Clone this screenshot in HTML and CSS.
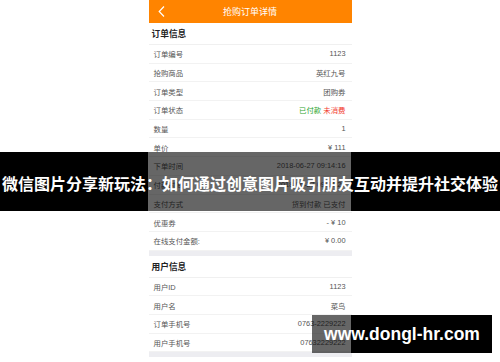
FILE: index.html
```html
<!DOCTYPE html>
<html lang="zh-CN">
<head>
    <meta charset="UTF-8">
    <meta name="viewport" content="width=device-width, initial-scale=1.0">
    <title>抢购订单详情</title>
    <link rel="stylesheet" href="styles.css">
</head>
<body>

<div class="phone">
    <div class="top-bar">
        <span class="back">
            <svg width="7" height="11" viewBox="0 0 7 11"><path d="M6 0.5 L1.2 5.5 L6 10.5" fill="none" stroke="#fff" stroke-width="1.2"/></svg>
        </span>
        <span class="top-title">抢购订单详情</span>
    </div>

    <!-- order info -->
    <div class="section">
        <div class="section-title">订单信息</div>
        <div class="row"><span>订单编号</span><span>1123</span></div>
        <div class="row"><span>抢购商品</span><span>英红九号</span></div>
        <div class="row"><span>订单类型</span><span>团购券</span></div>
        <div class="row"><span>订单状态</span><span><span class="paid">已付款</span> <span class="unused">未消费</span></span></div>
        <div class="row"><span>数量</span><span>1</span></div>
        <div class="row"><span>单价</span><span>¥ 111</span></div>
        <div class="row"><span>下单时间</span><span>2018-06-27 09:14:16</span></div>
        <div class="row"><span>付款时间</span><span>2018-06-27 09:14:20</span></div>
        <div class="row"><span>支付方式</span><span>货到付款 已支付</span></div>
        <div class="row"><span>优惠券</span><span>- ¥ 10</span></div>
        <div class="row"><span>在线支付金额:</span><span>¥ 0.00</span></div>
    </div>

    <div class="gap"></div>

    <!-- user info -->
    <div class="section">
        <div class="section-title">用户信息</div>
        <div class="row"><span>用户ID</span><span>1123</span></div>
        <div class="row"><span>用户名</span><span>菜鸟</span></div>
        <div class="row"><span>订单手机号</span><span>0763-2229222</span></div>
        <div class="row"><span>用户手机号</span><span>07632229222</span></div>
    </div>

    <div class="gap"></div>
</div>

<!-- caption band over the picture -->
<div class="caption">微信图片分享新玩法：如何通过创意图片吸引朋友互动并提升社交体验</div>

<div class="watermark">www.dongl-hr.com</div>

</body>
</html>
```

FILE: styles.css
```css
body {
    margin: 0;
    background: #fff;
    font-family: "Liberation Sans", "Noto Sans CJK SC", sans-serif;
    width: 500px;
    height: 362px;
    overflow: hidden;
    position: relative;
}

.phone {
    width: 203px;
    margin: 0 auto;
    background: #fff;
}

.top-bar {
    height: 23px;
    background-color: #ff8400;
    display: flex;
    align-items: center;
    justify-content: center;
    position: relative;
}

.back {
    position: absolute;
    left: 9px;
    top: 6px;
    line-height: 0;
}

.top-title {
    color: #fff;
    font-size: 9px;
}

.section-title {
    height: 22px;
    box-sizing: border-box;
    padding-left: 3px;
    display: flex;
    align-items: center;
    font-size: 8.7px;
    font-weight: bold;
    color: #222;
    border-bottom: 1px solid #f0f0f0;
}

.row {
    height: 18.7px;
    box-sizing: border-box;
    padding: 0 6px 0 5px;
    display: flex;
    justify-content: space-between;
    align-items: center;
    font-size: 7.4px;
    color: #555;
    border-bottom: 1px solid #f2f2f2;
}

.paid {
    color: #2ea52e;
}

.unused {
    color: #f23a2e;
}

.gap {
    height: 5px;
    background-color: #ededf1;
}

.caption {
    position: absolute;
    left: 0;
    top: 152px;
    width: 500px;
    height: 59px;
    background: linear-gradient(to right, #000 148px, rgba(0, 0, 0, 0.6) 148px, rgba(0, 0, 0, 0.6) 351px, #000 351px);
    color: #fff;
    font-size: 16px;
    font-weight: bold;
    display: flex;
    align-items: center;
    justify-content: center;
    padding-top: 3px;
    box-sizing: border-box;
    white-space: nowrap;
}

.watermark {
    position: absolute;
    left: 312px;
    top: 315px;
    width: 180px;
    height: 38px;
    background: linear-gradient(to right, rgba(0, 0, 0, 0.6) 39px, #000 39px);
    color: #fff;
    font-size: 17.5px;
    font-weight: bold;
    display: flex;
    align-items: center;
    justify-content: center;
}
```
